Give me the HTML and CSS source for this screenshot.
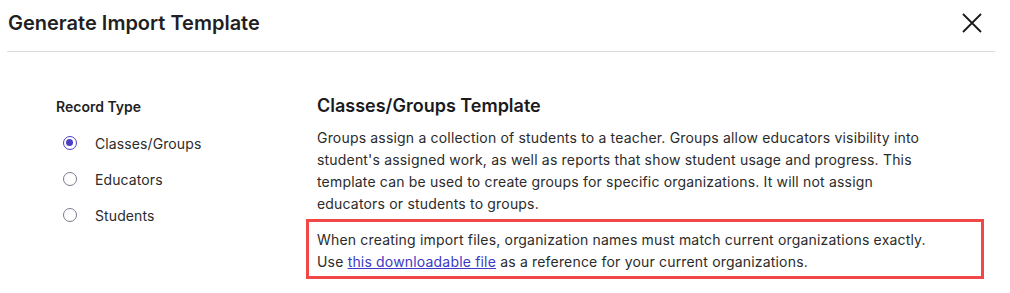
FILE: index.html
```html
<!DOCTYPE html>
<html>
<head>
<meta charset="utf-8">
<link rel="stylesheet" href="styles.css">
</head>
<body>
<div class="modal">
  <div class="header">
    <h1 class="title">Generate Import Template</h1>
    <button class="close" aria-label="Close">
      <svg width="20" height="20" viewBox="0 0 20 20"><path d="M1 1 L19 19 M19 1 L1 19" stroke="#1a1a1a" stroke-width="1.8" fill="none"/></svg>
    </button>
  </div>
  <div class="content">
    <div class="sidebar">
      <div class="label">Record Type</div>
      <label class="radio"><span class="dot checked"></span>Classes/Groups</label>
      <label class="radio"><span class="dot"></span>Educators</label>
      <label class="radio"><span class="dot"></span>Students</label>
    </div>
    <div class="main">
      <h2 class="heading">Classes/Groups Template</h2>
      <p class="desc">Groups assign a collection of students to a teacher. Groups allow educators visibility into student's assigned work, as well as reports that show student usage and progress. This template can be used to create groups for specific organizations. It will not assign educators or students to groups.</p>
      <div class="notice">When creating import files, organization names must match current organizations exactly.<br>Use <a href="#">this downloadable file</a> as a reference for your current organizations.</div>
    </div>
  </div>
</div>
</body>
</html>
```
FILE: styles.css
```css
html, body { margin: 0; padding: 0; background: #fff; }
body { font-family: Inter, "Noto Sans", sans-serif; color: #2b2b2b; }
.modal { width: 1010px; }
.header {
  margin: 0 15px 0 7px;
  height: 51px;
  border-bottom: 1px solid #dcdcdc;
  display: flex;
  align-items: center;
  justify-content: space-between;
}
.title {
  margin: 0 0 5px 1px;
  font-size: 20px;
  font-weight: 600;
  color: #1f1f24;
}
.close {
  border: 0; background: none; padding: 0;
  margin: 0 13px 6px 0;
  width: 20px; height: 20px;
  display: flex;
}
.content {
  display: flex;
  padding-top: 46px;
}
.sidebar {
  width: 261px;
  padding-left: 56px;
  display: flex;
  flex-direction: column;
}
.label {
  font-size: 14px;
  font-weight: 600;
  color: #1f1f24;
  line-height: 18px;
  margin-bottom: 9px;
}
.radio {
  display: flex;
  align-items: center;
  height: 36px;
  font-size: 14px;
  letter-spacing: 0.1px;
  color: #2b2b2b;
}
.dot {
  box-sizing: border-box;
  width: 14px; height: 14px;
  border-radius: 50%;
  border: 1.5px solid #7a7a8c;
  margin: 0 18px 0 7px;
  position: relative;
}
.dot.checked { border-color: #4b3fc4; }
.dot.checked::after {
  content: "";
  position: absolute;
  left: 2px; top: 2px;
  width: 7px; height: 7px;
  border-radius: 50%;
  background: #4b3fc4;
}
.main { width: 612px; margin-top: -2px; }
.heading {
  margin: 0 0 11px 0;
  font-size: 18px;
  font-weight: 600;
  color: #1a1a1e;
  line-height: 20px;
}
.desc {
  margin: 0;
  font-size: 14px;
  line-height: 22px;
  letter-spacing: 0.18px;
  color: #2b2b2b;
}
.notice {
  width: 656px;
  margin: 4px 0 0 -11px;
  border: 3px solid #f04747;
  padding: 7px 8px 3px 8px;
  font-size: 14px;
  line-height: 22px;
  letter-spacing: 0.18px;
  color: #2b2b2b;
  box-sizing: content-box;
}
.notice a { color: #3b39c6; text-decoration: underline; }
```
